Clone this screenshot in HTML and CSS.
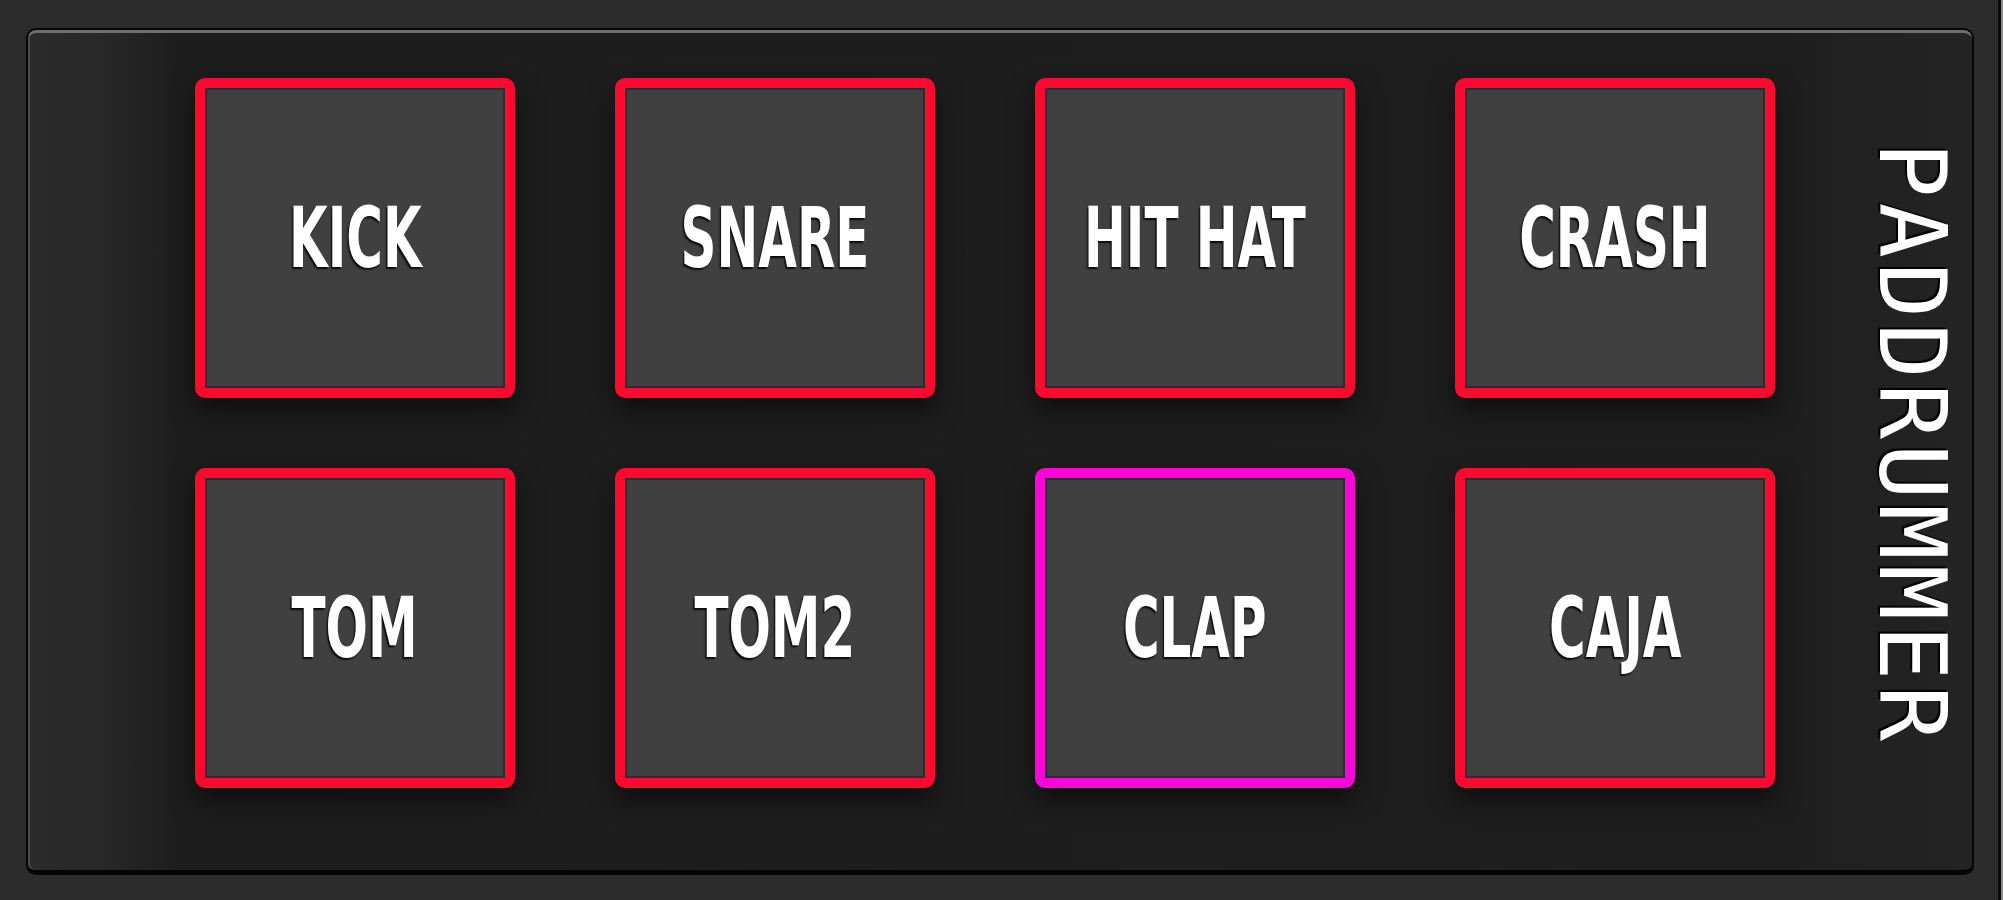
FILE: index.html
```html
<!DOCTYPE html>
<html lang="es">
<head>
  <meta charset="UTF-8">
  <title>PadDrummer</title>
  <link rel="stylesheet" href="styles.css">
</head>
<body>
  <div class="panel">
    <div class="pads">
      <button class="pad"><span>KICK</span></button>
      <button class="pad"><span>SNARE</span></button>
      <button class="pad"><span>HIT HAT</span></button>
      <button class="pad"><span>CRASH</span></button>
      <button class="pad"><span>TOM</span></button>
      <button class="pad"><span>TOM2</span></button>
      <button class="pad active"><span>CLAP</span></button>
      <button class="pad"><span>CAJA</span></button>
    </div>
    <div class="brand">PADDRUMMER</div>
  </div>
</body>
</html>
```

FILE: styles.css
```css
* {
  box-sizing: border-box;
}

body {
  margin: 0;
  height: 100vh;
  padding: 28px 0 0 26px;
  background: linear-gradient(to left, #8a8a8a 0 2px, #0c0c0c 2px 5px, #2c2c2c 5px);
  overflow: hidden;
}

.panel {
  width: 1948px;
  height: 847px;
  display: flex;
  padding: 48px 0 0 167px;
  border: 2px solid #050505;
  border-bottom-width: 5px;
  border-radius: 10px;
  background:
    linear-gradient(to right, #2b2b2b 0, #272727 80px, #1d1d1d 150px, #1e1e1e 1760px, #202020 1800px, #242424 100%);
  box-shadow: inset 0 4px 0 -1px #6e6e6e, inset 2px 0 0 #4a4a4a;
}

.pads {
  display: grid;
  grid-template-columns: repeat(4, 320px);
  grid-auto-rows: 320px;
  column-gap: 100px;
  row-gap: 70px;
}

.pad {
  display: flex;
  align-items: center;
  justify-content: center;
  padding: 0;
  background: #404040;
  border: 10px solid #fa0a2e;
  border-radius: 10px;
  box-shadow: inset 0 0 0 2px #2a2e30, 0 12px 26px rgba(0, 0, 0, 0.55);
  color: #ffffff;
  font-family: "DejaVu Sans Condensed", "DejaVu Sans", sans-serif;
  font-weight: bold;
  font-size: 84px;
  text-shadow: -2px 2px 2px rgba(0, 0, 0, 0.85);
  white-space: nowrap;
  cursor: pointer;
}

.pad span {
  display: inline-block;
  transform: scaleX(0.66);
}

.pad.active {
  border-color: #fb06d6;
}

.brand {
  writing-mode: vertical-rl;
  margin: 64px 0 0 90px;
  color: #ffffff;
  font-family: "DejaVu Sans Mono", monospace;
  font-size: 92px;
  line-height: 1;
  letter-spacing: 5px;
  text-shadow: -2px 2px 1px #000;
}
```
